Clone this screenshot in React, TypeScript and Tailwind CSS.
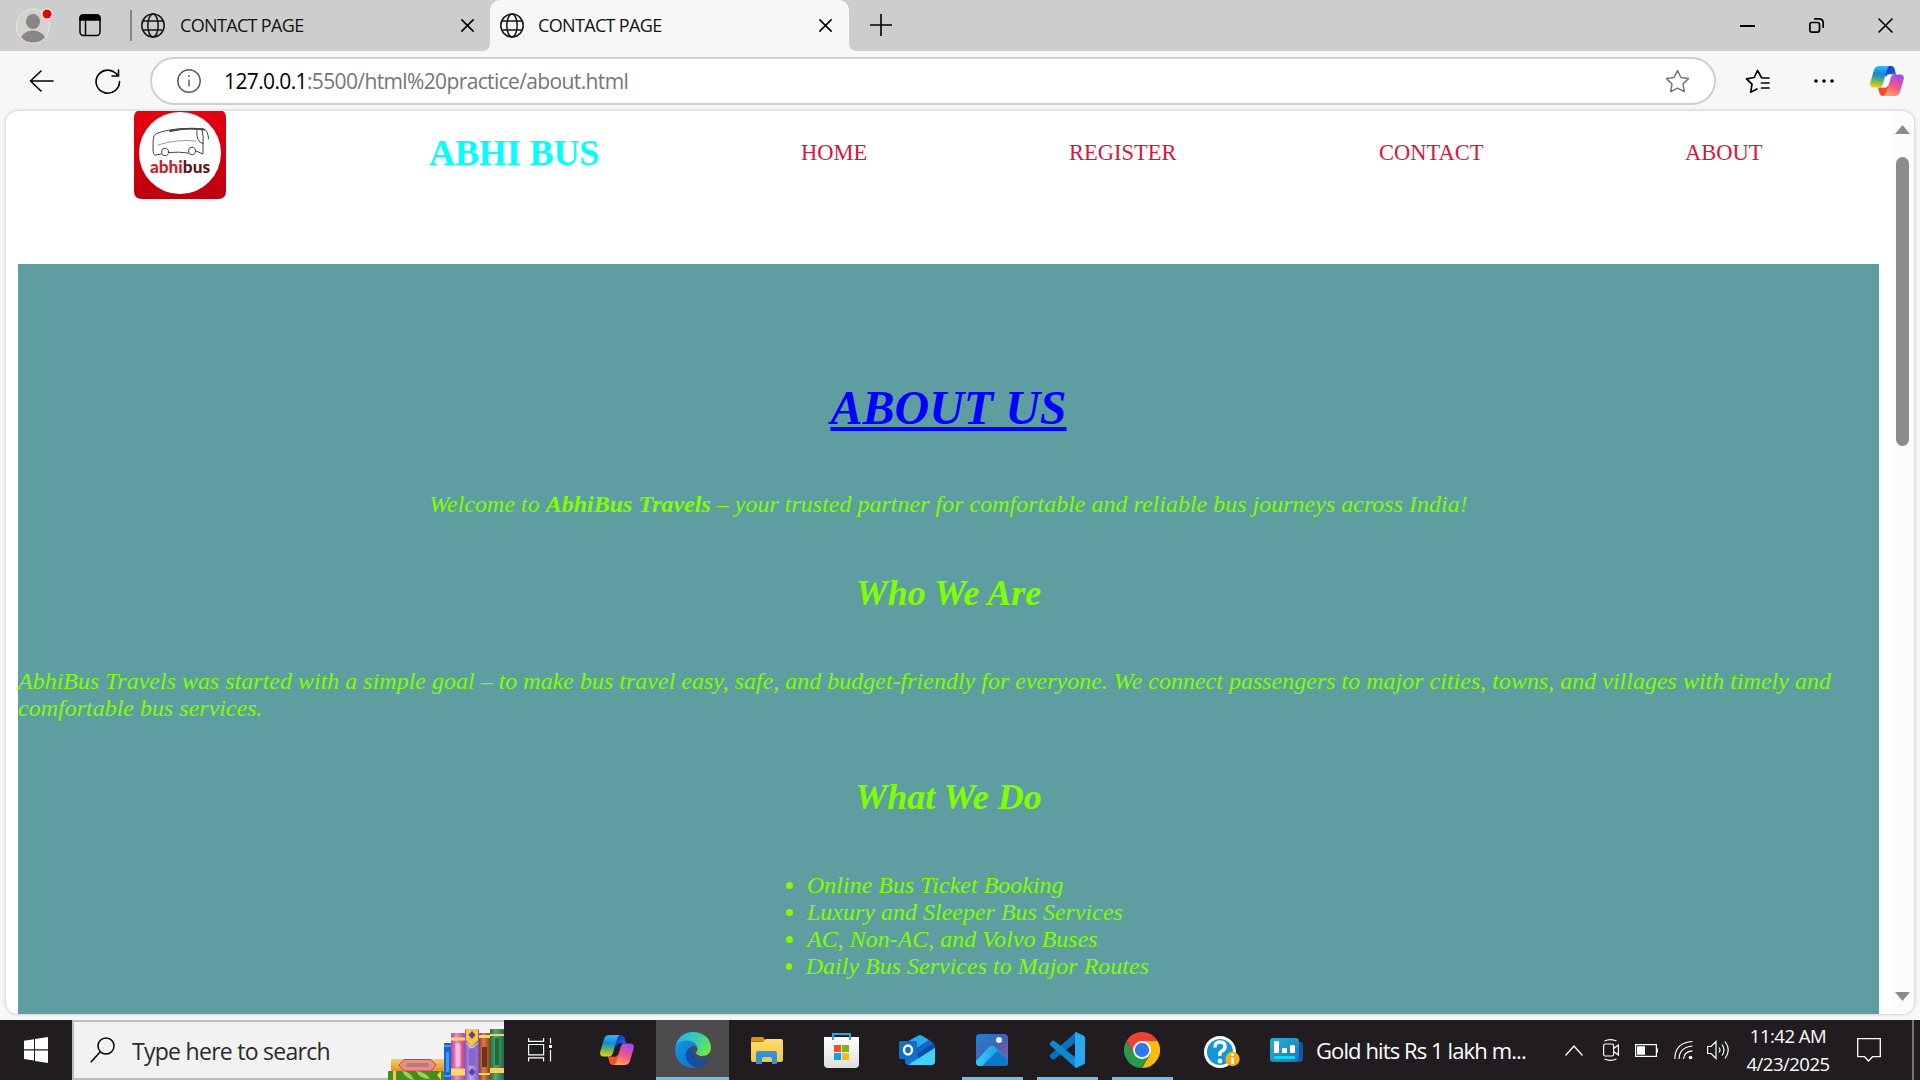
import React from "react";

const UI = "font-['Open_Sans','Noto_Sans',sans-serif]";
const SERIF = "font-['Liberation_Serif','Times_New_Roman',serif]";

function Globe() {
  return (
    <svg className="h-[25px] w-6 shrink-0" viewBox="0 0 24 25" fill="none" stroke="#151515" strokeWidth="1.5">
      <ellipse cx="12" cy="12.5" rx="11.2" ry="11.5" />
      <ellipse cx="12" cy="12.5" rx="5.2" ry="11.5" />
      <path d="M2 8h20M2 17h20" />
    </svg>
  );
}

function Cross({ size = 13, w = 1.5 }: { size?: number; w?: number }) {
  return (
    <svg width={size} height={size} className="shrink-0" viewBox="0 0 12 12" fill="none" stroke="#000" strokeWidth={w} strokeLinecap="round">
      <path d="M.8.8l10.4 10.4M11.2.8L.8 11.2" />
    </svg>
  );
}

function Copilot({ id, hole }: { id: string; hole: string }) {
  return (
    <svg className="h-[30px] w-[34px] shrink-0" viewBox="0 0 34 30">
      <defs>
        <linearGradient id={id + "a"} x1="0.3" y1="0" x2="0.2" y2="1">
          <stop offset="0" stopColor="#2bb8f5" />
          <stop offset="0.35" stopColor="#1387dd" />
          <stop offset="0.65" stopColor="#5fb365" />
          <stop offset="1" stopColor="#ffd000" />
        </linearGradient>
        <linearGradient id={id + "b"} x1="0.7" y1="0" x2="0.3" y2="1">
          <stop offset="0" stopColor="#a04bf0" />
          <stop offset="0.5" stopColor="#ee5290" />
          <stop offset="1" stopColor="#ffa45c" />
        </linearGradient>
        <linearGradient id={id + "c"} x1="0" y1="0" x2="1" y2="1">
          <stop offset="0" stopColor="#0a2bb5" />
          <stop offset="1" stopColor="#2a6ff0" />
        </linearGradient>
      </defs>
      <path d="M16 0h5c2 0 3 1 3.600 3l1.500 5.500h-6c-2 0-3 1-3.600 3L14 8z" fill={`url(#${id}c)`} />
      <path d="M8 21.500h7l4-2-2.600 8c-.6 1.800-1.700 2.500-3.400 2.500-2 0-3-1.200-3.600-3z" fill="#ee5030" />
      <path d="M9.500 0H20c-1.500.5-2.200 1.800-2.800 3.600L13 17.500c-.8 2.800-1.800 4-4.200 4H3.500C.8 21.500-.5 19.400.3 16.500L4 4C5 1.200 6.500 0 9.500 0z" fill={`url(#${id}a)`} />
      <path d="M24.500 30H13c1.900-.4 2.800-1.700 3.400-3.600L20.500 12.500c.8-2.700 1.900-4 4.200-4h5.700c2.700 0 4 2 3.200 4.900L30 26c-.9 2.800-2.500 4-5.500 4z" fill={`url(#${id}b)`} />
      <path d="M18 8.500h4c-1.200.7-1.700 1.800-2.200 3.400l-2.600 8c-.4 1.100-1 1.600-2 1.600h-3c1-.6 1.400-1.600 1.800-3l2.200-7.500c.4-1.300.8-2 1.800-2.500z" fill={hole} />
    </svg>
  );
}

function Tab({ active = false }: { active?: boolean }) {
  return (
    <div className={active ? "relative flex h-[51px] w-[359px] items-center rounded-t-[10px] bg-[#f7f7f7] pl-[10px]" : "flex h-[51px] w-[358px] items-center pl-[9px]"}>
      {active && (
        <>
          <svg className="absolute bottom-0 -left-2 h-2 w-2" viewBox="0 0 8 8"><path d="M8 0v8H0c5 0 8-3 8-8z" fill="#f7f7f7" /></svg>
          <svg className="absolute bottom-0 -right-2 h-2 w-2" viewBox="0 0 8 8"><path d="M0 0v8h8C3 8 0 5 0 0z" fill="#f7f7f7" /></svg>
        </>
      )}
      <Globe />
      <span className={(active ? "ml-[14px] " : "ml-[15px] ") + "w-[281px] pb-px text-[18px] leading-6 tracking-[-0.66px] whitespace-nowrap text-[#111]"}>CONTACT PAGE</span>
      <Cross />
    </div>
  );
}

function TitleBar() {
  return (
    <div className="flex h-[51px] bg-[#cdcdcd] text-black">
      <div className="flex h-[51px] w-[132px] shrink-0 items-center pl-4">
        <svg className="h-[36px] w-[38px]" viewBox="0 0 38 36">
          <defs><clipPath id="av"><ellipse cx="17" cy="18" rx="16.300" ry="16.500" /></clipPath></defs>
          <ellipse cx="17" cy="18" rx="16.500" ry="17" fill="#d4d2cf" stroke="#e6e6e3" />
          <g fill="#8b8683" clipPath="url(#av)"><ellipse cx="17" cy="13.500" rx="7" ry="7.500" /><ellipse cx="17" cy="32.500" rx="12.500" ry="10" /></g>
          <circle cx="31" cy="6" r="5.500" fill="#fff" /><circle cx="31" cy="6" r="4.500" fill="#e60000" />
        </svg>
        <svg className="ml-[25px] h-[23px] w-[22px]" viewBox="0 0 22 23" fill="none" stroke="#000" strokeWidth="1.500">
          <rect x="1" y="1" width="20" height="20.500" rx="3.500" />
          <path d="M1 6V4q0-3 3-3h14q3 0 3 3v2z" fill="#000" /><path d="M6.500 7v14" />
        </svg>
        <div className="ml-[29px] h-[31px] w-0.5 bg-[#858585]" />
      </div>
      <Tab />
      <Tab active />
      <svg className="mt-[14px] ml-[21px] h-[22px] w-[22px]" viewBox="0 0 22 22" stroke="#000" strokeWidth="1.600"><path d="M0 11h22M11 0v22" /></svg>
      <div className="ml-auto flex h-[51px] items-center pr-[27px]">
        <div className="h-0.5 w-[15px] bg-black" />
        <svg className="ml-[54px] h-[15px] w-[15px]" viewBox="0 0 15 15" fill="none" stroke="#000" strokeWidth="1.700">
          <rect x=".9" y="4.500" width="9.600" height="9.600" rx="2" /><path d="M5 .9h5q4.200 0 4.200 4.200V10" />
        </svg>
        <div className="ml-[54px]"><Cross size={15} w={1.3} /></div>
      </div>
    </div>
  );
}

function ToolBar() {
  return (
    <div className="flex h-[60px] items-center bg-[#f7f7f7]">
      <svg className="ml-[29px] h-[22px] w-[25px]" viewBox="0 0 25 22" fill="none" stroke="#000" strokeWidth="1.600" strokeLinecap="round" strokeLinejoin="round">
        <path d="M12 1L1.500 11 12 21M2 11h22" />
      </svg>
      <svg className="ml-[41px] h-[25px] w-[26px]" viewBox="0 0 26 25" fill="none" stroke="#000" strokeWidth="1.600" strokeLinecap="round">
        <path d="M24.500 12.500A11.700 11.500 0 1 1 20.500 4l3 2.800M23.500 1v6h-6.500" />
      </svg>
      <div className="ml-[29px] flex h-12 w-[1566px] items-center rounded-full border-2 border-[#cfcfcf] bg-white pl-[25px]">
        <svg className="h-6 w-6" viewBox="0 0 24 24" fill="none" stroke="#5d5d5d" strokeWidth="1.500"><circle cx="12" cy="12" r="11.200" /><path d="M12 10.500v7M12 6v2" /></svg>
        <div className="ml-[23px] w-[1441px] text-[21px] leading-7 tracking-[-0.63px] whitespace-nowrap text-[#767676]"><span className="text-black">127.0.0.1</span>:5500/html%20practice/about.html</div>
        <svg className="h-[25px] w-[25px] shrink-0" viewBox="0 0 25 25" fill="none" stroke="#757575" strokeWidth="1.500" strokeLinejoin="round">
          <path d="M12.500 1.500l3.400 7 7.600 1.100-5.500 5.400 1.300 7.700-6.800-3.600-6.800 3.600L7 15 1.500 9.600l7.600-1.100z" />
        </svg>
      </div>
      <svg className="ml-[29px] h-[25px] w-[26px]" viewBox="0 0 26 25" fill="none" stroke="#000" strokeWidth="1.700" strokeLinejoin="round" strokeLinecap="round">
        <path d="M24 9h-7.200L12.500 1.500 9.200 8.500 1.500 9.800l5.500 5.400-1.300 8L12 20M16.500 14H24M16.500 19H24" />
      </svg>
      <svg className="ml-[43px] h-1 w-5" viewBox="0 0 20 4"><circle cx="2" cy="2" r="1.800" /><circle cx="10" cy="2" r="1.800" /><circle cx="18" cy="2" r="1.800" /></svg>
      <div className="ml-[36px]"><Copilot id="tb" hole="#fff" /></div>
    </div>
  );
}

function Logo() {
  return (
    <svg className="h-[88px] w-[92px] shrink-0" viewBox="0 0 92 88">
      <defs><linearGradient id="red" x1="0" y1="0" x2="0" y2="1"><stop offset="0" stopColor="#e6000f" /><stop offset="1" stopColor="#bd000e" /></linearGradient></defs>
      <path d="M3 0h86q3 2 3 5v75q0 8-8 8H8q-8 0-8-8V5q0-3 3-5z" fill="url(#red)" />
      <ellipse cx="46" cy="42" rx="41" ry="41" fill="#fff" />
      <g fill="none" stroke="#444" strokeWidth="1" strokeLinecap="round">
        <path d="M27 43l-6 1.200q-2-1-2-5l.2-10q0-5 3-6.500Q32 18.500 50 17.500l20 .8q4 1 4.500 9.500" />
        <path d="M36 20Q55 16 70 18.500" strokeWidth="1.800" />
        <path d="M24 34q18-6 38-4" stroke="#999" />
        <path d="M63 19q-1 8 3 12l3 2q1-7-1-14M69 32v11l-7-3M35 41.500q10-1 19 .5" />
        <ellipse cx="31" cy="41" rx="3.500" ry="3.800" /><ellipse cx="58" cy="40" rx="3.500" ry="3.800" />
      </g>
      <text x="16" y="61.500" textLength="60" lengthAdjust="spacingAndGlyphs" fontFamily="Lato, 'Open Sans', sans-serif" fontWeight="900" fontSize="17.500"><tspan fill="#c8232f">abhi</tspan><tspan fill="#591820">bus</tspan></text>
    </svg>
  );
}

function Page() {
  return (
    <div className={"flex h-[903px] overflow-hidden rounded-[12px] bg-white shadow-[0_0_3px_1px_rgba(0,0,0,0.15)] " + SERIF}>
      <main className="w-[1885px] pl-3">
        <nav className="flex h-[153px] items-start pl-[116px] text-[22.5px] leading-[27px] whitespace-nowrap text-[#dc143c]">
          <Logo />
          <h1 className="mt-[22px] ml-[203px] w-[372px] text-[36px] leading-[41px] font-bold tracking-[-0.1px] text-[#00ffff]">ABHI BUS</h1>
          <a className="mt-[28px] w-[268px]">HOME</a>
          <a className="mt-[28px] w-[310px]">REGISTER</a>
          <a className="mt-[28px] w-[306px]">CONTACT</a>
          <a className="mt-[28px]">ABOUT</a>
        </nav>
        <section className="flex h-[750px] w-[1861px] flex-col items-center bg-[#5f9ea0] pt-[116px] text-[24px] leading-[27px] text-[#7fff00] italic">
          <h1 className="text-[48px] leading-[55px] font-bold text-[#0000ff] underline decoration-[4px] underline-offset-[3px]">ABOUT US</h1>
          <p className="mt-[56px] whitespace-nowrap">Welcome to <b>AbhiBus Travels</b> – your trusted partner for comfortable and reliable bus journeys across India!</p>
          <h2 className="mt-[55px] text-[36px] leading-[41px] font-bold">Who We Are</h2>
          <p className="mt-[54px] w-full">AbhiBus Travels was started with a simple goal – to make bus travel easy, safe, and budget-friendly for everyone. We connect passengers to major cities, towns, and villages with timely and<br />comfortable bus services.</p>
          <h2 className="mt-[55px] text-[36px] leading-[41px] font-bold">What We Do</h2>
          <ul className="mt-[54px] ml-[28px] w-[373px] list-none">
            {["Online Bus Ticket Booking", "Luxury and Sleeper Bus Services", "AC, Non-AC, and Volvo Buses", "Daily Bus Services to Major Routes"].map((t) => (
              <li key={t} className="flex items-center whitespace-nowrap"><span className="mr-[14px] ml-[10px] h-[7px] w-[7px] rounded-full bg-[#7fff00]" />{t}</li>
            ))}
          </ul>
        </section>
      </main>
      <aside className="flex w-[23px] flex-col items-center bg-[#fcfcfc] pt-[14px] pb-[13px]">
        <svg className="h-[9px] w-[15px]" viewBox="0 0 15 9"><path d="M7.500 0L15 9H0z" fill="#8b8b8b" /></svg>
        <div className="mt-[23px] h-[289px] w-[13px] rounded-full bg-[#8b8b8b]" />
        <svg className="mt-auto h-[9px] w-[15px]" viewBox="0 0 15 9"><path d="M0 0h15L7.500 9z" fill="#8b8b8b" /></svg>
      </aside>
    </div>
  );
}

function Books() {
  return (
    <svg className="h-[51px] w-[116px] shrink-0" viewBox="0 0 116 51">
      <defs>
        <linearGradient id="pk"><stop offset="0" stopColor="#b94687" /><stop offset=".4" stopColor="#ef8dc5" /><stop offset="1" stopColor="#b94382" /></linearGradient>
        <linearGradient id="pu"><stop offset="0" stopColor="#7c5ac5" /><stop offset=".4" stopColor="#c3a5fa" /><stop offset="1" stopColor="#7b56c8" /></linearGradient>
        <linearGradient id="br"><stop offset="0" stopColor="#87401f" /><stop offset=".4" stopColor="#d77f47" /><stop offset="1" stopColor="#8d3f1d" /></linearGradient>
        <linearGradient id="gr"><stop offset="0" stopColor="#1c6b40" /><stop offset=".4" stopColor="#54a674" /><stop offset="1" stopColor="#1d6c41" /></linearGradient>
        <linearGradient id="yl" x1="0" x2="0" y1="0" y2="1"><stop offset="0" stopColor="#f9cf67" /><stop offset="1" stopColor="#d99425" /></linearGradient>
      </defs>
      <rect x="3" y="30" width="53" height="12" rx="1" fill="url(#yl)" />
      <path d="M16 30.500h27l5 5.500-5 6H16l-5-6z" fill="#ee8b86" stroke="#bf4854" />
      <rect x="18" y="34" width="23" height="4" rx="2" fill="#b17e77" />
      <rect x="0" y="42" width="56" height="9" rx="1" fill="#438f19" />
      <path d="M14 42q8 0 12 9-8-1-12-9zM28 42q10 1 14 8-10 0-14-8z" fill="#9ed15b" />
      <path d="M5 42h3v9H5zM49 46l4-4v9z" fill="#f9c568" />
      <rect x="56" y="14" width="7" height="37" fill="#1764d5" /><rect x="58" y="23" width="3" height="20" fill="#4697fb" /><path d="M56 17h7M56 47h7" stroke="#8ac2ff" />
      <rect x="63" y="4" width="14" height="47" rx="1" fill="url(#pk)" /><rect x="67.500" y="14" width="5" height="24" rx="2.500" fill="#f8b7df" /><path d="M63 39.500h14v7H63zM63 8.500h14v3H63z" fill="#ffd770" />
      <rect x="77" y="0" width="14" height="51" rx="1" fill="url(#pu)" /><path d="M78 0h12v11l-6 6-6-6z" fill="#f8c73c" /><rect x="80.500" y="19" width="7" height="18" rx="3" fill="#8666ca" /><path d="M84 2l3.500 4L84 10l-3.500-4zM84 39l3.500 4-3.500 4-3.500-4z" fill="#6040a0" /><path d="M78 14l6 5 6-5" stroke="#ffd659" fill="none" />
      <rect x="91" y="4" width="11" height="47" rx="1" fill="url(#br)" /><rect x="94" y="18" width="5" height="20" fill="#6f3418" /><path d="M91 6h11v3H91zM91 44h11v2H91z" fill="#ffd574" />
      <rect x="102" y="0" width="14" height="51" rx="1" fill="url(#gr)" /><rect x="107" y="9" width="4" height="27" fill="#236841" /><path d="M102 5h14v2h-14zM102 39h14v5h-14z" fill="#f9cf69" />
    </svg>
  );
}

function EdgeIcon() {
  return (
    <svg className="h-9 w-9" viewBox="0 0 36 36">
      <defs>
        <linearGradient id="e1" x1="0" x2="1" y1=".2" y2=".6"><stop offset="0" stopColor="#27b6e8" /><stop offset=".5" stopColor="#35c8b8" /><stop offset="1" stopColor="#6be848" /></linearGradient>
        <linearGradient id="e2" x1="0" x2="1" y1="0" y2="1"><stop offset="0" stopColor="#1695dd" /><stop offset="1" stopColor="#0972cf" /></linearGradient>
      </defs>
      <path d="M.5 15C2 6 9 0 18 0c10.500 0 18 7 18 15.500 0 5.500-4 8.500-8.500 8.500-5 0-7.500-2-6-4.500 2-3 .5-5.500-3-7C12 9 3 10 .5 15z" fill="url(#e1)" />
      <path d="M0 18C0 12 5 8.500 11 8.500c7 0 11.500 4 11.500 8.500 0-2-2-3-4-3-3.500 0-6.500 4.500-6.500 10 0 6 4.500 10.500 9.500 11.600C10 38 0 29 0 18z" fill="url(#e2)" />
      <path d="M13.500 16.500C10 20 10 27 14 31c1.500 2 4 4 7.500 4.600C27 35 31 32 33.500 27c.5-1-.4-1.300-1-.8C25 30 16 25 18 17.500c-1-2-3-2.500-4.500-1z" fill="#134f9e" />
      <path d="M22.300 16c.3 1.200 0 2.500-.8 3.500-1.500 2.500 1 4.500 6 4.500-5 1.500-9-1.500-9.500-5 0-2 2-4 4.300-3z" fill="#4e4b4e" />
    </svg>
  );
}

function Folder() {
  return (
    <svg className="h-[27px] w-8" viewBox="0 0 32 27">
      <defs><linearGradient id="fo" x1="0" x2="0" y1="0" y2="1"><stop offset="0" stopColor="#ffdc73" /><stop offset="1" stopColor="#f7c543" /></linearGradient></defs>
      <path d="M0 2q0-2 2-2h9q1 0 2 1l2 3H0z" fill="#dc9500" />
      <path d="M0 4.500h12L15 2h15q2 0 2 2v19q0 2-2 2H2q-2 0-2-2z" fill="url(#fo)" />
      <path d="M5 16q0-2 2-2h17q2 0 2 2v11h-5v-5q0-2-2-2h-6q-2 0-2 2v5H5z" fill="#3392dd" />
    </svg>
  );
}

function Store() {
  return (
    <svg className="h-[35px] w-[35px]" viewBox="0 0 35 35">
      <defs><linearGradient id="st" x1="0" x2="0" y1="0" y2="1"><stop offset="0" stopColor="#fff" /><stop offset="1" stopColor="#dedede" /></linearGradient></defs>
      <path d="M0 4h35v27q0 4-4 4H4q-4 0-4-4z" fill="url(#st)" />
      <path d="M9 7V1h17v6" fill="none" stroke="#21aae5" strokeWidth="2" />
      <path d="M10 12h7v7h-7z" fill="#f25022" /><path d="M18 12h7v7h-7z" fill="#7fba00" /><path d="M10 20h7v7h-7z" fill="#00a4ef" /><path d="M18 20h7v7h-7z" fill="#ffb900" />
    </svg>
  );
}

function Outlook() {
  return (
    <svg className="h-[30px] w-9" viewBox="0 0 36 30">
      <path d="M6 8L19 .7q2-1 4 0L34 8q2 1.500 2 4v14q0 4-4 4H10q-4 0-4-4z" fill="#1176cd" />
      <path d="M6 8L19 .7q2-1 4 0L30 5 14 15z" fill="#29a9ec" /><path d="M16 16L34 8q2 2 2 4L20 24z" fill="#0a4da8" /><path d="M18 13L30 5l4 3-16 11z" fill="#1068c5" />
      <path d="M12 28l24-15v13q0 4-4 4H10z" fill="#43d0f5" />
      <rect x="0" y="6" width="18" height="18" rx="2" fill="#106fc9" />
      <ellipse cx="9" cy="15" rx="4" ry="4.500" fill="none" stroke="#fff" strokeWidth="2.400" />
    </svg>
  );
}

function Photos() {
  return (
    <svg className="h-8 w-8" viewBox="0 0 32 32">
      <defs>
        <linearGradient id="ph" x1="0" x2="1" y1="0" y2="1"><stop offset="0" stopColor="#1c83d6" /><stop offset=".5" stopColor="#4461b4" /><stop offset="1" stopColor="#9a56a3" /></linearGradient>
        <linearGradient id="pm" x1="0" x2="1" y1="0" y2="0"><stop offset="0" stopColor="#33ccf6" /><stop offset="1" stopColor="#1688d8" /></linearGradient>
        <clipPath id="pc"><rect width="32" height="32" rx="4" /></clipPath>
      </defs>
      <g clipPath="url(#pc)"><rect width="32" height="32" fill="url(#ph)" /><path d="M0 27L13 13q3-3 6 0l15 14v6H0z" fill="url(#pm)" /><path d="M6 32L20 18q2-1 3 0l10 9v6z" fill="#0879cd" /></g>
      <circle cx="23" cy="6" r="3" fill="#eef0f6" />
    </svg>
  );
}

function Code() {
  return (
    <svg className="h-9 w-9" viewBox="0 0 36 36">
      <path d="M27 0L1 23q-1 1 0 2l2 2q1 1 2.500 0L27 10z" fill="#0872b8" />
      <path d="M27 36L1 13q-1-1 0-2l2-2q1-1 2.500 0L27 26z" fill="#0c89d1" />
      <path d="M27 0l7.500 3.500Q36 4 36 6v24q0 2-1.500 2.500L27 36q-1 0-1-2V2q0-2 1-2z" fill="#2ba6f0" />
    </svg>
  );
}

function Chrome() {
  return (
    <svg className="h-9 w-9" viewBox="0 0 36 36">
      <path d="M2.400 9A18 18 0 0 1 33.600 9H18L10.200 22.500z" fill="#ea4335" />
      <path d="M33.600 9A18 18 0 0 1 18 36l7.800-13.500L18 9z" fill="#fbbc05" />
      <path d="M18 36A18 18 0 0 1 2.400 9l7.800 13.500H25.800z" fill="#2a9a48" />
      <circle cx="18" cy="18" r="9" fill="#fff" /><circle cx="18" cy="18" r="7.200" fill="#2f78ee" />
    </svg>
  );
}

function Help() {
  return (
    <svg className="h-8 w-9" viewBox="0 0 36 32">
      <circle cx="16" cy="16" r="16" fill="#fff" /><circle cx="16" cy="16" r="13" fill="#1595d6" />
      <path d="M11 11.500q0-5.500 5-5.500t5 4.500q0 3-3 4.500t-2 5" fill="none" stroke="#fff" strokeWidth="3.400" /><circle cx="16" cy="25" r="2.400" fill="#fff" />
      <circle cx="28.500" cy="23" r="7.200" fill="#f5ad1b" /><path d="M28.500 21.500v6.500M28.500 17.500v2.500" stroke="#fff" strokeWidth="2.600" />
    </svg>
  );
}

function News() {
  return (
    <svg className="h-6 w-[33px]" viewBox="0 0 33 24">
      <defs><linearGradient id="nw" x1="0" x2="1" y1="0" y2="1"><stop offset="0" stopColor="#27b3cd" /><stop offset="1" stopColor="#1c72c4" /></linearGradient></defs>
      <path d="M28 4h3q2 0 2 3v14q0 3-3 3h-2z" fill="#1457a0" /><rect width="29" height="24" rx="3" fill="url(#nw)" />
      <g fill="#fff"><rect x="4" y="3" width="5" height="12" rx="1" /><rect x="12" y="10" width="5" height="5" rx="1" /><rect x="20" y="7" width="5" height="8" rx="1" /></g><rect x="4" y="18" width="21" height="3" rx="1" fill="#11d6f2" />
    </svg>
  );
}

function TaskButton({ children, running = false, active = false, className }: { children: React.ReactNode; running?: boolean; active?: boolean; className: string }) {
  return (
    <div className={"flex h-[60px] shrink-0 flex-col items-center " + (active ? "bg-[#4e4b4e] " : "") + className}>
      <div className={"flex h-[57px] items-center justify-center pt-[3px]" + (running ? " pr-px" : "")}>{children}</div>
      {(running || active) && <div className="h-[3px] w-full bg-[#76b9ed]" />}
    </div>
  );
}

function Taskbar() {
  return (
    <footer className="flex h-[60px] shrink-0 items-center bg-[#201c20] text-white">
      <svg className="ml-6 h-[26px] w-6 shrink-0" viewBox="0 0 24 26" fill="#fff"><path d="M0 3.800l10-1.600v10H0zM11 2l13-2v12.200H11zM0 13.400h10v10.200L0 22zM11 13.400h13V26l-13-2z" /></svg>
      <div className="ml-6 flex h-[60px] w-[432px] shrink-0 items-center border-2 border-r-0 border-[#bdbdbd] bg-[#f2f2f2]">
        <svg className="ml-4 h-[26px] w-[25px]" viewBox="0 0 25 26" fill="none" stroke="#000" strokeWidth="1.500"><circle cx="16" cy="9" r="8" /><path d="M10.300 14.700L.8 25.200" /></svg>
        <span className="ml-[17px] w-[256px] pt-0.5 text-[23px] leading-8 tracking-[-0.72px] whitespace-nowrap text-[#2b2b2b]">Type here to search</span>
        <div className="-mb-0.5 h-[51px] self-end"><Books /></div>
      </div>
      <svg className="ml-6 h-6 w-6 shrink-0" viewBox="0 0 24 24" fill="none" stroke="#fff" strokeWidth="1.200"><path d="M.6 0v3.400h15V0M.6 6.500h15v10.300H.6zM.6 23.500v-3.600h15v3.600M22.500 0v5.500M22.500 12v11.500" /><path d="M21 7h3v3h-3z" fill="#fff" stroke="none" /></svg>
      <TaskButton className="ml-[36px] w-[58px]"><Copilot id="tk" hole="#201c20" /></TaskButton>
      <TaskButton active className="ml-[10px] w-[73px]"><EdgeIcon /></TaskButton>
      <TaskButton className="ml-[6px] w-[64px]"><Folder /></TaskButton>
      <TaskButton className="ml-[10px] w-[64px]"><Store /></TaskButton>
      <TaskButton className="ml-[12px] w-[64px]"><Outlook /></TaskButton>
      <TaskButton running className="ml-[13px] w-[61px]"><Photos /></TaskButton>
      <TaskButton running className="ml-[14px] w-[61px]"><Code /></TaskButton>
      <TaskButton running className="ml-[14px] w-[61px]"><Chrome /></TaskButton>
      <TaskButton className="ml-[17px] w-[64px] pt-0.5"><Help /></TaskButton>
      <div className="ml-[16px]"><News /></div>
      <span className="ml-[13px] w-[220px] shrink-0 text-[22px] leading-7 tracking-[-0.9px] whitespace-nowrap">Gold hits Rs 1 lakh m...</span>
      <div className="ml-[29px] flex shrink-0 items-center">
        <svg className="h-[11px] w-[18px]" viewBox="0 0 18 11" fill="none" stroke="#fff" strokeWidth="1.300"><path d="M.5 10.500L9 1l8.500 9.500" /></svg>
        <svg className="ml-[20px] h-[22px] w-4" viewBox="0 0 16 22" fill="none" stroke="#fff" strokeWidth="1.200"><rect x=".6" y="5" width="10" height="12" rx="1.500" /><path d="M10.600 9.500L15.400 6v10l-4.800-3.500M1.500 2Q7.500-.8 13.500 2M1.500 20q6 2.800 12 0" /></svg>
        <svg className="ml-[16px] h-[13px] w-[23px]" viewBox="0 0 23 13" fill="none" stroke="#fff" strokeWidth="1.200"><rect x=".6" y=".6" width="20.800" height="11.800" /><path d="M2 2.200h8v8.600H2zM22 4.500h1v4h-1z" fill="#fff" stroke="none" /></svg>
        <svg className="ml-[16px] h-5 w-[19px]" viewBox="0 0 19 20" fill="none" stroke="#fff" strokeWidth="1.200"><path d="M.8 19Q1 2.500 18.500 1.500M5 19Q5.500 7 18.500 6M9.500 19Q10 11.500 18.500 10.800" /><circle cx="16.500" cy="17.500" r="1.800" fill="#fff" stroke="none" /></svg>
        <svg className="ml-[14px] h-5 w-[23px]" viewBox="0 0 23 20" fill="none" stroke="#fff" strokeWidth="1.200"><path d="M.6 6.500h3.500L9 1.500v17l-4.900-5H.6zM12 7.500q2 2.500 0 5M15 4.500q4 5.500 0 11M18 1.500q6.500 8.500 0 17" /></svg>
      </div>
      <div className="ml-[13px] flex w-[90px] shrink-0 flex-col items-center text-[18.500px] leading-[28px] tracking-[-0.5px] whitespace-nowrap"><span>11:42 AM</span><span>4/23/2025</span></div>
      <svg className="ml-[24px] h-6 w-6 shrink-0" viewBox="0 0 24 24" fill="none" stroke="#fff" strokeWidth="1.300"><path d="M.7.7h22.600v18H15.500L11.500 23l-4-4.300H.7z" /></svg>
      <div className="ml-auto h-full w-0.5 shrink-0 bg-[#757375]" />
      <div className="w-1.5 shrink-0" />
    </footer>
  );
}

export default function App() {
  return (
    <div className={"flex h-[1080px] w-[1920px] flex-col overflow-hidden bg-[#f7f7f7] " + UI}>
      <TitleBar />
      <ToolBar />
      <div className="h-[909px] px-1.5"><Page /></div>
      <Taskbar />
    </div>
  );
}
